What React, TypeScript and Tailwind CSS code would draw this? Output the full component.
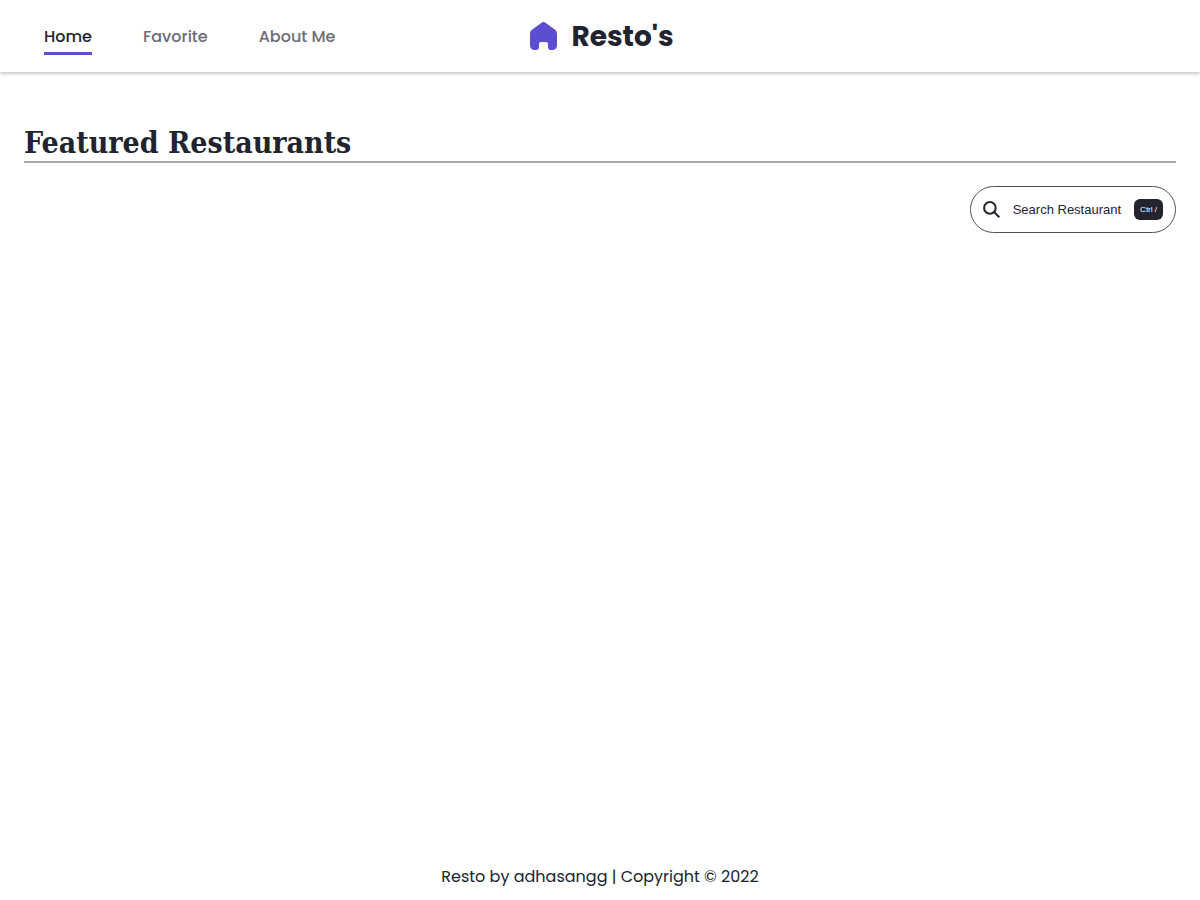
const links = [
  { label: 'Home', href: '#/home', active: true },
  { label: 'Favorite', href: '#/favorite', active: false },
  { label: 'About Me', href: '#/about', active: false },
];

function HomeLogo() {
  return (
    <svg viewBox="0 0 27 28" className="h-7 w-[27px] shrink-0" fill="#5b4fcf" aria-hidden="true">
      <path d="M11.2 1a3.600 3.600 0 0 1 4.600 0l9.300 6.800A4.600 4.600 0 0 1 27 11.500V23.500a4.500 4.500 0 0 1-4.500 4.500h-2.100a2.400 2.400 0 0 1-2.400-2.400V22a2 2 0 0 0-2-2h-5a2 2 0 0 0-2 2v3.600A2.400 2.400 0 0 1 6.600 28H4.500A4.500 4.500 0 0 1 0 23.500V11.500a4.600 4.600 0 0 1 1.900-3.700z" />
    </svg>
  );
}

function SearchIcon() {
  return (
    <svg viewBox="0 0 17 17" className="size-[17px] shrink-0" fill="none" stroke="currentColor" strokeWidth="2" aria-hidden="true">
      <circle cx="6.900" cy="6.900" r="5.800" />
      <path d="M11 11l5.300 5.300" />
    </svg>
  );
}

export default function App() {
  return (
    <div className="flex min-h-screen flex-col bg-white font-[Poppins,Inter,sans-serif] text-[#21242f]">
      <header className="grid h-18 grid-cols-[1fr_auto_1fr] items-center pr-10 pl-11 shadow-[0_1px_4px_rgba(0,0,0,0.3)]">
        <nav>
          <ul className="flex gap-[51px]">
            {links.map((link) => (
              <li key={link.label} className="flex">
                <a
                  href={link.href}
                  className={
                    link.active
                      ? 'border-b-3 border-[#5b4fcf] pt-2 pb-[3px] text-base font-medium'
                      : 'border-b-3 border-transparent pt-2 pb-[3px] text-base font-medium text-[#6b6c75]'
                  }
                >
                  {link.label}
                </a>
              </li>
            ))}
          </ul>
        </nav>
        <a href="#/home" className="flex items-center gap-[14px] text-[28px] leading-[42px] font-bold">
          <HomeLogo />
          <span className="pt-[2px]">Resto's</span>
        </a>
      </header>

      <main className="flex grow flex-col px-6 pt-[52px]">
        <h1 className="border-b-2 border-[#a7a6ab] font-['Roboto_Slab','DejaVu_Serif_Condensed','DejaVu_Serif',serif] text-[30px] leading-[37px] font-bold">
          Featured Restaurants
        </h1>
        <button
          type="button"
          className="mt-[23px] flex h-[47px] items-center gap-[13px] self-end rounded-full border border-[#50515b] px-3 font-['Liberation_Sans',Arial,sans-serif] text-[13px]"
        >
          <SearchIcon />
          Search Restaurant
          <kbd className="flex h-[21px] items-center rounded-md bg-[#21242f] px-[6px] font-['Liberation_Sans',Arial,sans-serif] text-[8px] text-white">
            Ctrl /
          </kbd>
        </button>
      </main>

      <footer className="pt-[13px] pb-[11px] text-center text-base font-normal">
        <p>Resto by adhasangg | Copyright © 2022</p>
      </footer>
    </div>
  );
}
